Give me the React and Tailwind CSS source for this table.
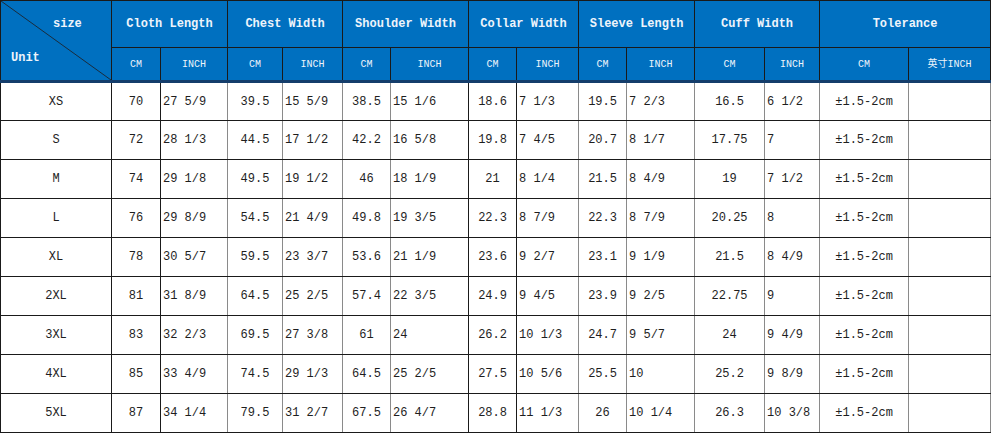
import React from 'react'

const groups = [
  'Cloth Length',
  'Chest Width',
  'Shoulder Width',
  'Collar Width',
  'Sleeve Length',
  'Cuff Width',
  'Tolerance',
]

const widths = [111, 49, 67, 55, 60, 48, 78, 48, 62, 48, 68, 70, 55, 89, 82]

const rows = [
  ['XS', '70', '27 5/9', '39.5', '15 5/9', '38.5', '15 1/6', '18.6', '7 1/3', '19.5', '7 2/3', '16.5', '6 1/2'],
  ['S', '72', '28 1/3', '44.5', '17 1/2', '42.2', '16 5/8', '19.8', '7 4/5', '20.7', '8 1/7', '17.75', '7'],
  ['M', '74', '29 1/8', '49.5', '19 1/2', '46', '18 1/9', '21', '8 1/4', '21.5', '8 4/9', '19', '7 1/2'],
  ['L', '76', '29 8/9', '54.5', '21 4/9', '49.8', '19 3/5', '22.3', '8 7/9', '22.3', '8 7/9', '20.25', '8'],
  ['XL', '78', '30 5/7', '59.5', '23 3/7', '53.6', '21 1/9', '23.6', '9 2/7', '23.1', '9 1/9', '21.5', '8 4/9'],
  ['2XL', '81', '31 8/9', '64.5', '25 2/5', '57.4', '22 3/5', '24.9', '9 4/5', '23.9', '9 2/5', '22.75', '9'],
  ['3XL', '83', '32 2/3', '69.5', '27 3/8', '61', '24', '26.2', '10 1/3', '24.7', '9 5/7', '24', '9 4/9'],
  ['4XL', '85', '33 4/9', '74.5', '29 1/3', '64.5', '25 2/5', '27.5', '10 5/6', '25.5', '10', '25.2', '9 8/9'],
  ['5XL', '87', '34 1/4', '79.5', '31 2/7', '67.5', '26 4/7', '28.8', '11 1/3', '26', '10 1/4', '26.3', '10 3/8'],
]

// left border colour of each data column (index 1..)
const dark = [true, true, true, false, false, false, false, true, true, false, false, false, false, false, false]

const font = { fontFamily: '"Liberation Mono", "Noto Sans CJK SC", monospace' }

export default function App() {
  return (
    <div className="w-[1000px] h-[438px] bg-white overflow-hidden" style={font}>
      <table className="table-fixed border-collapse w-[991px]">
        <colgroup>
          {widths.map((w, i) => (
            <col key={i} style={{ width: w }} />
          ))}
        </colgroup>
        <thead className="bg-[#0070c0] text-[#eef4fb]">
          <tr className="h-[47px]">
            <th
              rowSpan={2}
              className="relative p-0 border border-[#1a1a1a] border-b-[3px] border-b-[#143d6b] font-normal"
            >
              <svg className="absolute inset-0 w-full h-full" viewBox="0 0 111 80" preserveAspectRatio="none">
                <line x1="0" y1="0" x2="111" y2="80" stroke="#1a2a3a" strokeWidth="1" />
              </svg>
              <span className="absolute left-[52px] top-[14px] text-[12px] font-bold">size</span>
              <span className="absolute left-[10px] top-[48px] text-[12px] font-bold">Unit</span>
            </th>
            {groups.map((g) => (
              <th
                key={g}
                colSpan={2}
                className="border border-[#1a1a1a] text-[12px] font-bold whitespace-nowrap"
              >
                {g}
              </th>
            ))}
          </tr>
          <tr className="h-[34px]">
            {Array.from({ length: 14 }).map((_, i) => (
              <th
                key={i}
                className="border border-[#1a1a1a] border-b-[3px] border-b-[#143d6b] text-[10px] font-normal whitespace-nowrap"
              >
                {i === 13 ? '英寸INCH' : i % 2 === 0 ? 'CM' : 'INCH'}
              </th>
            ))}
          </tr>
        </thead>
        <tbody className="text-[12px] text-[#1e1e1e]">
          {rows.map((r) => (
            <tr key={r[0]} className="h-[39px]">
              {r.map((v, i) => (
                <td
                  key={i}
                  className={
                    'border-y border-y-[#1a1a1a] border-l ' +
                    (dark[i] ? 'border-l-[#1a1a1a] ' : 'border-l-[#8a8a8a] ') +
                    (i === 0 || i % 2 === 1 ? 'text-center' : 'text-left pl-[2px]') +
                    ' whitespace-nowrap'
                  }
                >
                  {v}
                </td>
              ))}
              <td className="border-y border-y-[#1a1a1a] border-l border-l-[#8a8a8a] text-center whitespace-nowrap">
                ±1.5-2cm
              </td>
              <td className="border-y border-y-[#1a1a1a] border-x border-l-[#8a8a8a] border-r-[#8a8a8a]"></td>
            </tr>
          ))}
        </tbody>
      </table>
    </div>
  )
}
